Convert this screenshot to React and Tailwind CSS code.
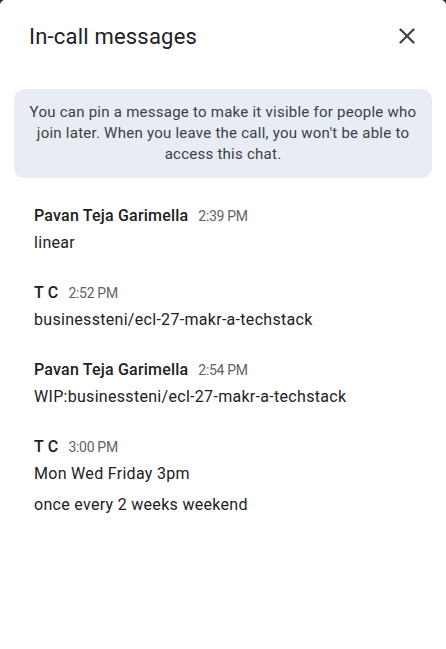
import { X } from "lucide-react";

const messages = [
  { name: "Pavan Teja Garimella", time: "2:39 PM", lines: ["linear"] },
  { name: "T C", time: "2:52 PM", lines: ["businessteni/ecl-27-makr-a-techstack"] },
  { name: "Pavan Teja Garimella", time: "2:54 PM", lines: ["WIP:businessteni/ecl-27-makr-a-techstack"] },
  { name: "T C", time: "3:00 PM", lines: ["Mon Wed Friday 3pm", "once every 2 weeks weekend"] },
];

export default function App() {
  return (
    <div className="h-[649px] w-[446px] bg-[#202124] font-['Roboto',sans-serif]">
      <div className="h-full w-full rounded-t-[5px] bg-white">
        <div className="flex h-[70px] items-center justify-between pl-[29px] pr-[26px] pt-[2px]">
          <h1 className="text-[22px] text-[#202124] tracking-[0.2px]">In-call messages</h1>
          <X className="h-[26px] w-[26px] text-[#444746]" strokeWidth={2.2} />
        </div>
        <div className="mx-[14px] mt-[19px] rounded-[10px] bg-[#e8edf5] px-[14px] pb-[13px] pt-[13px] text-center text-[15px] leading-[21px] tracking-[0.25px] text-[#3c4043]">
          You can pin a message to make it visible for people who join later. When you leave the call, you won't be able to access this chat.
        </div>
        <div className="flex flex-col gap-[27px] px-[34px] pt-[26px]">
          {messages.map((m, i) => (
            <div key={i}>
              <div className="flex h-[22px] items-baseline gap-[10px]">
                <span className="text-[16px] font-medium tracking-[0.2px] text-[#202124]">{m.name}</span>
                <span className="text-[14px] tracking-[-0.3px] text-[#5f6368]">{m.time}</span>
              </div>
              <div className="mt-[6px] flex flex-col gap-[9px]">
                {m.lines.map((l, j) => (
                  <div key={j} className="text-[16px] leading-[22px] tracking-[0.3px] text-[#202124]">
                    {l}
                  </div>
                ))}
              </div>
            </div>
          ))}
        </div>
      </div>
    </div>
  );
}
